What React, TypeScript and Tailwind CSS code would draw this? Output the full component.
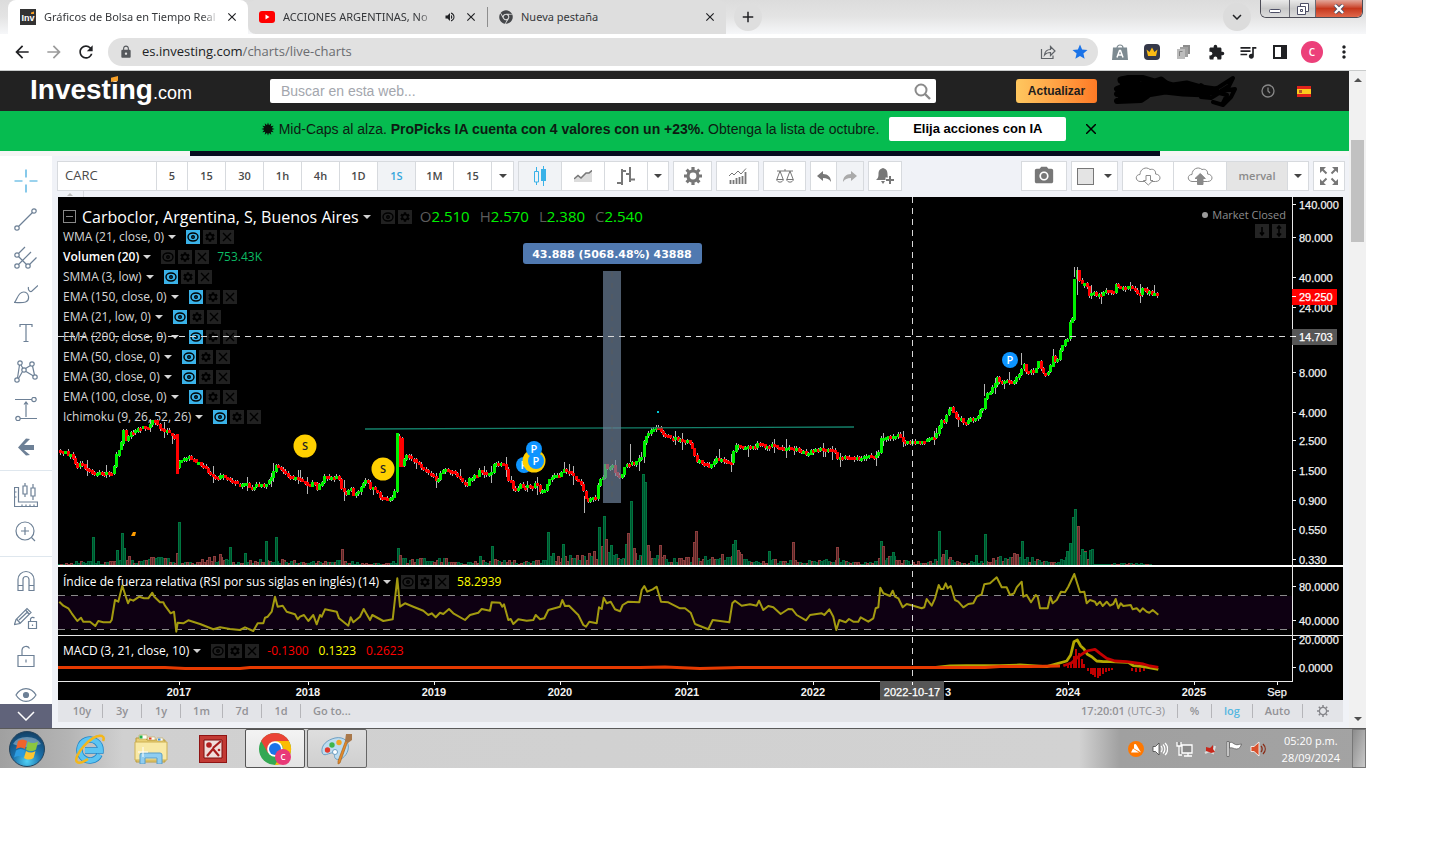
import React from "react";
import {
  MdAdd,
  MdArrowBack,
  MdArrowForward,
  MdCameraAlt,
  MdClose,
  MdExpandMore,
  MdExtension,
  MdLock,
  MdMoreVert,
  MdQueueMusic,
  MdRefresh,
  MdSettings,
  MdStar,
  MdVolumeUp,
} from "react-icons/md";
import { FaChrome } from "react-icons/fa";

type Pt = [number, number];

/* ---------- chart data ---------- */

const STEP = 2.42;
const BASE = 565;

const CLOSES: Pt[] = [
  [59, 450], [62, 451], [66, 453], [70, 455], [74, 460], [77, 465], [82, 462], [84, 467], [90, 469], [95, 474],
  [100, 472], [105, 473], [112, 473], [114, 466], [116, 453], [120, 449], [121, 441], [122, 425], [126, 440], [129, 433],
  [133, 433], [138, 427], [143, 427], [148, 427], [152, 420], [155, 421], [158, 425], [161, 430], [168, 432], [173, 437],
  [175, 436], [177, 473], [178, 478], [179, 460], [188, 457], [193, 460], [200, 463], [204, 467], [209, 473], [214, 478],
  [222, 476], [228, 479], [233, 481], [240, 485], [245, 482], [253, 489], [258, 483], [266, 484], [272, 475], [275, 464],
  [277, 466], [283, 470], [290, 476], [300, 480], [306, 482], [309, 485], [313, 481], [317, 489], [321, 482], [325, 475],
  [330, 477], [338, 478], [341, 487], [345, 494], [350, 487], [354, 496], [359, 490], [363, 484], [366, 480], [371, 488],
  [376, 490], [381, 497], [386, 500], [390, 498], [394, 497], [395, 483], [397, 434], [399, 436], [401, 466], [403, 463],
  [405, 455], [411, 459], [413, 456], [415, 462], [421, 466], [428, 473], [433, 475], [436, 482], [440, 474], [445, 469],
  [450, 471], [455, 473], [460, 478], [467, 486], [470, 478], [476, 476], [480, 470], [483, 472], [491, 474], [492, 463],
  [500, 463], [505, 465], [508, 480], [511, 482], [515, 492], [519, 485], [526, 486], [533, 487], [536, 482], [540, 490],
  [546, 488], [548, 480], [553, 477], [556, 475], [561, 474], [563, 467], [567, 470], [572, 475], [578, 480], [582, 486],
  [584, 496], [587, 501], [590, 497], [597, 497], [598, 480], [602, 480], [604, 462], [607, 470], [612, 464], [616, 474],
  [621, 478], [624, 466], [630, 463], [637, 462], [642, 456], [643, 442], [646, 435], [650, 433], [655, 426], [658, 426],
  [661, 434], [670, 436], [680, 440], [690, 442], [694, 454], [697, 460], [703, 463], [710, 467], [713, 461], [717, 458],
  [723, 461], [732, 461], [734, 444], [738, 445], [744, 448], [755, 446], [760, 443], [765, 446], [772, 445], [780, 448],
  [790, 449], [798, 449], [806, 453], [812, 450], [820, 449], [830, 449], [834, 450], [837, 459], [840, 457], [850, 457],
  [860, 458], [868, 456], [874, 458], [877, 453], [880, 453], [881, 436], [885, 438], [890, 437], [894, 434], [900, 437],
  [904, 443], [912, 440], [920, 442], [925, 442], [930, 436], [935, 437], [938, 430], [940, 419], [944, 420], [947, 411],
  [951, 408], [955, 416], [960, 418], [965, 423], [970, 419], [976, 417], [980, 411], [984, 407], [985, 395], [990, 392],
  [993, 387], [997, 377], [1000, 380], [1004, 381], [1008, 379], [1012, 382], [1016, 378], [1021, 371], [1023, 362],
  [1026, 370], [1030, 371], [1035, 372], [1038, 360], [1041, 371], [1045, 375], [1049, 370], [1052, 356], [1057, 361],
  [1060, 349], [1064, 340], [1067, 340], [1069, 322], [1072, 318], [1073, 296], [1075, 272], [1077, 270], [1080, 283],
  [1086, 284], [1088, 297], [1092, 291], [1098, 295], [1102, 296], [1106, 290], [1112, 293], [1116, 283], [1122, 288],
  [1130, 286], [1136, 291], [1140, 294], [1143, 288], [1150, 293], [1155, 293], [1159, 296],
];

const VOLUME_SPIKES: [number, number, "g" | "r"][] = [
  [93, 28, "g"], [117, 15, "g"], [122, 32, "g"], [124, 17, "g"], [177, 12, "r"], [179, 43, "g"], [220, 11, "r"],
  [230, 18, "g"], [245, 12, "g"], [266, 24, "g"], [276, 28, "g"], [342, 16, "r"], [398, 17, "g"], [400, 10, "r"],
  [480, 9, "g"], [492, 19, "g"], [548, 33, "g"], [553, 12, "g"], [563, 21, "g"], [582, 10, "r"], [599, 38, "g"],
  [602, 19, "r"], [604, 49, "g"], [606, 26, "r"], [611, 20, "g"], [626, 21, "g"], [628, 32, "r"], [631, 64, "g"],
  [634, 17, "r"], [643, 91, "g"], [645, 83, "g"], [648, 20, "r"], [660, 20, "r"], [694, 23, "r"], [696, 34, "r"],
  [733, 21, "g"], [735, 25, "g"], [738, 15, "r"], [769, 14, "g"], [793, 23, "r"], [837, 18, "r"], [881, 24, "g"],
  [883, 19, "r"], [893, 13, "g"], [939, 34, "g"], [943, 11, "r"], [946, 15, "g"], [976, 10, "g"], [985, 31, "g"],
  [1014, 12, "r"], [1022, 24, "g"], [1067, 14, "g"], [1070, 22, "g"], [1073, 48, "g"], [1075, 56, "g"], [1078, 39, "r"],
  [1082, 16, "g"], [1085, 13, "g"], [1090, 15, "g"],
];

const VOLUME_LEVELS: Pt[] = [
  [58, 1], [80, 4], [90, 6], [100, 3], [125, 10], [135, 3], [150, 8], [160, 8], [175, 3], [190, 3], [215, 8], [235, 3],
  [255, 5], [275, 7], [300, 3], [340, 5], [360, 2], [385, 2], [400, 6], [440, 7], [460, 2], [500, 6], [520, 3], [560, 9],
  [600, 14], [620, 10], [650, 14], [670, 7], [700, 7], [740, 12], [755, 5], [790, 5], [810, 4], [835, 6], [860, 2],
  [890, 9], [910, 3], [930, 4], [945, 8], [960, 3], [990, 6], [1015, 11], [1030, 7], [1045, 4], [1065, 8], [1092, 14],
  [1094, 1], [1135, 2], [1160, 0],
];

const at = (pts: Pt[], x: number) => {
  for (let i = 1; i < pts.length; i++) {
    if (x <= pts[i][0]) {
      const [x0, y0] = pts[i - 1];
      const [x1, y1] = pts[i];
      return y0 + ((y1 - y0) * (x - x0)) / (x1 - x0);
    }
  }
  return pts[pts.length - 1][1];
};

const noise = (i: number) => {
  const v = Math.sin(i * 127.1 + 11.7) * 43758.5453;
  return v - Math.floor(v);
};

/* Sub-pixel traces are stored at three units to the pixel, relative to an origin. */
const trace = (ox: number, oy: number, flat: number[]) => {
  const out: string[] = [];
  for (let i = 0; i < flat.length; i += 2) {
    out.push(`${(ox + flat[i] / 3).toFixed(1)},${(oy + flat[i + 1] / 3).toFixed(1)}`);
  }
  return out.join(" ");
};

const RSI = [
  trace(0, 440, [
    178, 485, 190, 497, 205, 505, 215, 520, 232, 543, 243, 533, 250, 545, 270, 545, 286, 558, 295, 543, 310, 547, 330, 547,
    335, 540, 345, 480, 355, 485, 367, 437, 384, 490, 390, 478, 400, 482, 418, 470, 432, 475, 445, 475, 457, 458, 463, 470,
    480, 487, 490, 487, 495, 497, 512, 520, 522, 515, 529, 575, 533, 548, 550, 550, 565, 541, 600, 552, 640, 568, 660, 562,
    690, 567, 720, 570, 735, 562, 760, 573, 773, 550, 790, 550, 795, 533, 803, 530, 815, 515, 825, 470, 833, 500, 848, 497,
    860, 515, 885, 523, 893, 538,
  ]),
  trace(300, 400, [
    0, 650, 12, 645, 25, 663, 40, 645, 50, 673, 60, 645, 65, 650, 75, 628, 110, 635, 117, 655, 145, 677, 152, 652, 160, 667,
    180, 650, 191, 627, 210, 660, 217, 645, 250, 663, 278, 658, 292, 535, 300, 620, 315, 610, 340, 620, 370, 632, 385, 645,
    395, 640, 407, 652, 420, 638, 430, 642, 447, 627, 460, 640, 495, 660, 510, 645, 535, 638, 545, 627, 570, 632, 575, 607,
    600, 608, 607, 620, 612, 613, 625, 660, 632, 657, 640, 672, 655, 658, 680, 662, 700, 660, 707, 645, 720, 658, 733, 655,
    745, 630, 780, 620, 787, 600, 795, 618, 807, 617, 825, 635, 835, 645, 850, 675, 858, 680, 868, 665, 890, 670, 897, 622,
    905, 627, 911, 593, 920, 610, 932, 605, 945, 628, 960, 634, 968, 615, 985, 605, 1018, 607, 1025, 570, 1033, 558,
    1042, 575, 1058, 568, 1070, 560, 1083, 605, 1105, 607, 1140, 625, 1155, 625, 1172, 638, 1185, 672,
  ]),
  trace(700, 400, [
    0, 678, 25, 688, 38, 660, 88, 667, 97, 610, 105, 602, 125, 617, 150, 613, 170, 617, 177, 602, 190, 630, 205, 618,
    220, 622, 242, 642, 265, 627, 277, 628, 290, 645, 318, 661, 330, 645, 365, 640, 373, 645, 388, 628, 400, 650, 409, 690,
    418, 660, 437, 667, 447, 657, 460, 665, 475, 665, 482, 652, 505, 665, 520, 655, 527, 625, 535, 622, 541, 563, 550, 580,
    570, 588, 578, 572, 585, 590, 595, 595, 608, 622, 620, 612, 640, 617, 665, 625, 673, 622, 680, 597, 695, 617, 705, 595,
    716, 555, 722, 567, 730, 567, 737, 550, 743, 565, 752, 558, 765, 600, 775, 605, 790, 622, 805, 612, 820, 610, 830, 590,
    845, 583, 853, 553, 870, 550, 890, 532, 905, 562, 920, 562, 930, 585, 942, 580, 950, 562, 965, 545, 970, 590, 980, 585,
    993, 607, 1007, 585, 1013, 590, 1020, 625, 1043, 625, 1051, 590, 1058, 610, 1070, 600, 1083, 575, 1095, 577, 1105, 560,
  ]),
  trace(1000, 500, [
    223, 222, 240, 277, 253, 275, 260, 310, 270, 300, 285, 305, 290, 315, 300, 305, 308, 318, 320, 305, 330, 317, 340, 312,
    347, 297, 355, 325, 362, 310, 370, 318, 392, 315, 398, 328, 410, 325, 420, 335, 428, 325, 440, 335, 448, 338, 458, 330,
    475, 344,
  ]),
].join(" ");

const MACD_LINE = trace(1000, 500, [
  -400, 502, -200, 503, -150, 498, -100, 497, 0, 497, 60, 495, 140, 500, 175, 490, 200, 483, 212, 465, 222, 425, 232, 420,
  242, 438, 252, 447, 262, 463, 275, 470, 290, 483, 310, 485, 330, 485, 385, 487, 400, 497, 430, 500, 475, 508,
]);

const SIGNAL_LINE = trace(1000, 500, [
  190, 497, 215, 488, 235, 470, 260, 453, 285, 448, 300, 460, 320, 475, 345, 483, 380, 485, 430, 492, 450, 498, 475, 502,
]);

const HISTOGRAM: Pt[] = [
  [1067, -4], [1070, -6], [1073, -12], [1075, -19], [1078, -15], [1081, -9], [1083, -4], [1087, 3], [1090, 6], [1092, 7],
  [1094, 9], [1097, 10], [1099, 8], [1102, 6], [1105, 4], [1108, 3], [1111, 2], [1131, 3], [1135, 4], [1139, 4], [1143, 3],
];

const PRICE_LABELS: [string, number][] = [
  ["140.000", 205], ["80.000", 238], ["40.000", 278], ["24.000", 308], ["8.000", 373], ["4.000", 413], ["2.500", 441],
  ["1.500", 471], ["0.900", 501], ["0.550", 530], ["0.330", 560], ["80.0000", 587], ["40.0000", 621], ["20.0000", 640],
  ["0.0000", 668],
];

const YEARS: [string, number][] = [
  ["2017", 179], ["2018", 308], ["2019", 434], ["2020", 560], ["2021", 687], ["2022", 813], ["2024", 1068], ["2025", 1194],
];

function Candles() {
  const wicks: React.ReactElement[] = [];
  const bodies: React.ReactElement[] = [];
  let prev = at(CLOSES, 58);
  const total = Math.floor((1159 - 58) / STEP);
  for (let i = 1; i <= total; i++) {
    const x = 58 + i * STEP;
    const px = Math.round(x);
    const close = at(CLOSES, x) + (noise(i) - 0.5) * 3;
    const up = close < prev;
    const top = Math.round(Math.min(close, prev));
    const h = Math.max(3, Math.round(Math.abs(close - prev)) + 1);
    const big = noise(i + 900) > 0.86 ? 9 : 2;
    const a = Math.round(noise(i + 300) * big);
    const b = Math.round(noise(i + 600) * big);
    wicks.push(<rect key={i} x={px} y={top - a} width={1} height={h + a + b} fill="#b5b5b5" />);
    bodies.push(<rect key={i} x={px - 1} y={top} width={3} height={h} fill={up ? "#00f000" : "#ff0000"} />);
    prev = close;
  }
  return (
    <g shapeRendering="crispEdges">
      <g>{wicks}</g>
      <g>{bodies}</g>
      <rect x="396" y="433" width="3" height="46" fill="#00f000" />
      <rect x="399" y="436" width="2" height="31" fill="#ff0000" />
      <rect x="176" y="434" width="3" height="40" fill="#ff0000" />
      <rect x="584" y="496" width="1" height="17" fill="#b5b5b5" />
      <rect x="630" y="444" width="1" height="18" fill="#b5b5b5" />
      <rect x="984" y="384" width="1" height="12" fill="#b5b5b5" />
      <rect x="1021" y="353" width="1" height="12" fill="#b5b5b5" />
      <rect x="1074" y="267" width="1" height="10" fill="#b5b5b5" />
      <rect x="1077" y="267" width="1" height="28" fill="#b5b5b5" />
    </g>
  );
}

function VolumeBars() {
  const out: React.ReactElement[] = [];
  for (let i = 0; i < 455; i++) {
    const x = 58 + i * STEP;
    const level = at(VOLUME_LEVELS, x);
    const h = Math.round(level * (0.35 + noise(i + 50) * 0.85));
    if (h < 1) continue;
    const green = noise(i + 77) > 0.5;
    out.push(
      <rect key={i} x={Math.round(x) + 0.5} y={BASE - h + 0.5} width={2} height={h} fill={green ? "#00472a" : "#562828"} stroke={green ? "#00693e" : "#8c3c3c"} />
    );
  }
  VOLUME_SPIKES.forEach(([x, h, c]) =>
    out.push(
      <rect key={`s${x}`} x={x - 0.5} y={BASE - h + 0.5} width={2} height={h} fill={c === "g" ? "#00522f" : "#562828"} stroke={c === "g" ? "#00753f" : "#8c3c3c"} />
    )
  );
  return <g>{out}</g>;
}

function Marker({ x, y, r, color, ink, label }: { x: number; y: number; r: number; color: string; ink: string; label: string }) {
  return (
    <g>
      <circle cx={x} cy={y} r={r} fill={color} />
      <text x={x} y={y + 4} textAnchor="middle" fill={ink} className="font-['Open_Sans',sans-serif] text-[11px] font-semibold">
        {label}
      </text>
    </g>
  );
}

function Chart() {
  return (
    <svg viewBox="58 197 1285 503" className="relative block h-auto w-full pointer-events-none" role="img" aria-label="CARC">
      <rect x="58" y="596" width="1234" height="33" fill="#0e0012" />
      <VolumeBars />
      <Candles />
      <path d="M131 536l2-4h3l-1 4z" fill="#ff9d00" />
      <line x1="365" y1="429" x2="854" y2="427" stroke="#14806a" strokeWidth="1.4" />
      <rect x="657" y="411" width="2" height="2" fill="#00c8d7" />
      <rect x="603" y="271" width="18" height="232" fill="#6c8099" fillOpacity="0.7" />
      <path d="M612 272V503" stroke="#5b5b5b" strokeDasharray="5 6" strokeOpacity="0.7" />
      <rect x="523" y="243" width="179" height="21" rx="3" fill="#5079b0" />
      <text x="612" y="258" textAnchor="middle" fill="#fff" className="font-['DejaVu_Sans',sans-serif] text-[11px] font-bold">
        43.888 (5068.48%) 43888
      </text>

      <Marker x={305} y={446} r={11.5} color="#ffd000" ink="#222" label="S" />
      <Marker x={383} y={469} r={11.5} color="#ffd000" ink="#222" label="S" />
      <Marker x={524} y={465} r={8} color="#0d94ff" ink="#fff" label="P" />
      <circle cx="534" cy="461" r="11.5" fill="#ffd000" />
      <Marker x={534} y={449} r={8} color="#0d94ff" ink="#fff" label="P" />
      <Marker x={536} y={461} r={8} color="#0d94ff" ink="#fff" label="P" />
      <Marker x={1010} y={360} r={8} color="#0d94ff" ink="#fff" label="P" />

      <g stroke="#8a8a8a" strokeDasharray="7 6">
        <path d="M58 595.5H1292M58 629.5H1292" />
      </g>
      <polyline points={RSI} fill="none" stroke="#a39a10" strokeWidth="2" strokeLinejoin="round" />

      {HISTOGRAM.map(([x, h]) => (
        <rect key={x} x={x} y={h < 0 ? 668 + h : 668} width="2" height={Math.abs(h)} fill="#c00000" />
      ))}
      <polyline points={MACD_LINE} fill="none" stroke="#b3a800" strokeWidth="2.8" strokeLinejoin="round" />
      <path d="M58 667.5H165L185 668.5H240L250 667.5H640L665 667L700 668.5L740 667.5H985L1000 666.5H1030L1060 666" fill="none" stroke="#e63a00" strokeWidth="3" />
      <polyline points={SIGNAL_LINE} fill="none" stroke="#c40000" strokeWidth="2.8" strokeLinejoin="round" />

      <g fill="#e8e8e8">
        <rect x="58" y="565" width="1285" height="2" fill="#fff" />
        <rect x="58" y="635" width="1285" height="1" />
        <rect x="58" y="681" width="1235" height="1" />
        <rect x="1292" y="197" width="1" height="485" />
      </g>
      <g stroke="#d8d8d8" strokeDasharray="6 5">
        <path d="M58 336.5H1292" />
        <path d="M912.5 197V682" />
      </g>

      <g className="font-['Liberation_Sans',Arial,sans-serif] text-[11px]" fill="#f2f2f2">
        {PRICE_LABELS.map(([t, y]) => (
          <g key={t}>
            <rect x="1292" y={y - 1} width="4" height="1" />
            <text x="1299" y={y + 4} stroke="#f2f2f2" strokeWidth="0.25">{t}</text>
          </g>
        ))}
        <rect x="1294" y="631" width="48" height="4" fill="#000" />
        <rect x="1292" y="289" width="45" height="16" fill="#ff0000" />
        <rect x="1292" y="329" width="45" height="16" fill="#565656" />
        <path d="M1292 296.5h4M1292 336.5h4" stroke="#fff" />
        <text x="1299" y="301" fill="#fff" stroke="#fff" strokeWidth="0.25">29.250</text>
        <text x="1299" y="341" fill="#fff" stroke="#fff" strokeWidth="0.25">14.703</text>
        {YEARS.map(([t, x]) => (
          <g key={t}>
            <rect x={x} y="682" width="1" height="3" />
            <text x={x} y="696" textAnchor="middle" className="font-bold">{t}</text>
          </g>
        ))}
        <text x="945" y="696" className="font-bold">3</text>
        <rect x="1277" y="682" width="1" height="3" />
        <text x="1277" y="696" textAnchor="middle" stroke="#f2f2f2" strokeWidth="0.25">Sep</text>
        <rect x="880" y="681" width="64" height="19" fill="#565656" />
        <path d="M912.5 682v3" stroke="#fff" />
        <text x="912" y="696" textAnchor="middle" fill="#fff" stroke="#fff" strokeWidth="0.25">2022-10-17</text>
      </g>
    </svg>
  );
}

/* ---------- legend ---------- */

function Caret({ className }: { className: string }) {
  return (
    <svg viewBox="0 0 8 4" className={`h-1 w-2 shrink-0 ${className}`} aria-hidden="true">
      <path d="M0 0h8L4 4z" fill="currentColor" />
    </svg>
  );
}

function LegendButtons({ on = false, close = true }: { on?: boolean; close?: boolean }) {
  const off = "flex size-[14px] items-center justify-center bg-[#212121] text-black";
  return (
    <span className="ml-2.5 flex gap-[3px]">
      <button type="button" aria-label="Ocultar" className={on ? "flex size-[14px] items-center justify-center bg-[#3ab2e8] text-black" : off}>
        <svg viewBox="0 0 12 12" className="size-3" fill="none" stroke="currentColor" strokeWidth="1.4">
          <ellipse cx="6" cy="6" rx="5" ry="4" />
          <circle cx="6" cy="6" r="1.3" />
        </svg>
      </button>
      <button type="button" aria-label="Formato" className={off}>
        <MdSettings className="size-3" />
      </button>
      {close && (
        <button type="button" aria-label="Eliminar" className={off}>
          <svg viewBox="0 0 12 12" className="size-3" fill="none" stroke="currentColor" strokeWidth="1.4">
            <path d="M2 2l8 8M10 2l-8 8" />
          </svg>
        </button>
      )}
    </span>
  );
}

const STUDIES: { name: string; on: boolean; value?: string }[] = [
  { name: "WMA (21, close, 0)", on: true },
  { name: "Volumen (20)", on: false, value: "753.43K" },
  { name: "SMMA (3, low)", on: true },
  { name: "EMA (150, close, 0)", on: true },
  { name: "EMA (21, low, 0)", on: true },
  { name: "EMA (200, close, 0)", on: true },
  { name: "EMA (50, close, 0)", on: true },
  { name: "EMA (30, close, 0)", on: true },
  { name: "EMA (100, close, 0)", on: true },
  { name: "Ichimoku (9, 26, 52, 26)", on: true },
];

const OHLC: [string, string][] = [["O", "2.510"], ["H", "2.570"], ["L", "2.380"], ["C", "2.540"]];

function Legend() {
  return (
    <>
      <div className="absolute top-[9px] left-[5px]">
        <div className="flex h-[21px] items-center text-[16px] leading-none text-white">
          <svg viewBox="0 0 13 13" className="mr-1.5 size-[13px]" fill="none" stroke="#888">
            <rect x=".5" y=".5" width="12" height="12" />
            <path d="M3 6.5h7" />
          </svg>
          <h1 className="font-medium">Carboclor, Argentina, S, Buenos Aires</h1>
          <Caret className="ml-1 text-[#d0d0d0]" />
          <LegendButtons close={false} />
          <span className="ml-2 flex gap-2.5 text-[15px]">
            {OHLC.map(([k, v]) => (
              <span key={k} className="text-[#5c5c5c]">
                {k}
                <span className="font-medium text-[#00f000]">{v}</span>
              </span>
            ))}
          </span>
        </div>
        {STUDIES.map((s) => (
          <div key={s.name} className="flex h-5 items-center text-[12px] text-[#d6d6d6]">
            <span className={s.value ? "font-semibold text-white" : ""}>{s.name}</span>
            <Caret className="ml-1" />
            <LegendButtons on={s.on} />
            {s.value && <span className="ml-2 text-[#0cba64]">{s.value}</span>}
          </div>
        ))}
      </div>
      <div className="absolute top-[375px] left-[5px] flex h-5 items-center text-[12px] text-white">
        <span>Índice de fuerza relativa (RSI por sus siglas en inglés) (14)</span>
        <Caret className="ml-1 text-[#d0d0d0]" />
        <LegendButtons />
        <span className="ml-2 text-[#ffff00]">58.2939</span>
      </div>
      <div className="absolute top-[444px] left-[5px] flex h-5 items-center text-[12px] text-white">
        <span>MACD (3, 21, close, 10)</span>
        <Caret className="ml-1 text-[#d0d0d0]" />
        <LegendButtons />
        <span className="ml-2 text-[#f00]">-0.1300</span>
        <span className="ml-2.5 text-[#ffff00]">0.1323</span>
        <span className="ml-2.5 text-[#f00]">0.2623</span>
      </div>
      <div className="absolute top-[9px] right-[57px] flex flex-col items-end text-[11px] font-medium text-[#8d8d8d]">
        <div className="flex h-[18px] items-center gap-1">
          <span className="size-1.5 rounded-full bg-[#9a9a9a]" />
          Market Closed
        </div>
        <div className="flex gap-[3px]">
          <svg viewBox="0 0 14 14" className="size-[14px] bg-[#242424]" fill="none" stroke="#000" strokeWidth="1.6">
            <path d="M7 3v8M5 8.500l2 2.500 2-2.500" />
          </svg>
          <svg viewBox="0 0 14 14" className="size-[14px] bg-[#242424]" fill="none" stroke="#000" strokeWidth="1.6">
            <path d="M7 2v10M5 4.500l2-2.500 2 2.500M5 9.500l2 2.500 2-2.500" />
          </svg>
        </div>
      </div>
    </>
  );
}

/* ---------- browser chrome ---------- */

function TabBar() {
  return (
    <div className="flex h-[34px] bg-gradient-to-b from-[#dcdcdc] via-[#e4e4e4] to-[#f6f7f9] pl-2 font-['Noto_Sans','Open_Sans',sans-serif] text-[11px] text-[#35373a]">
      <div className="flex w-60 items-center rounded-t-lg bg-white pr-[9px] pl-3">
        <svg viewBox="0 0 16 16" className="mr-2 size-4 shrink-0">
          <rect width="16" height="16" fill="#333" />
          <text x="8" y="11.500" textAnchor="middle" fill="#fff" className="font-['Liberation_Sans',sans-serif] text-[9px] font-bold">Inv</text>
          <path d="M11 3.500l3-1v2.500h-3z" fill="#f7a028" />
        </svg>
        <span className="min-w-0 flex-1 overflow-hidden whitespace-nowrap [mask-image:linear-gradient(90deg,#000_90%,transparent)]">
          Gráficos de Bolsa en Tiempo Real
        </span>
        <button type="button" aria-label="Cerrar pestaña" className="ml-1.5 text-[#202124]">
          <MdClose className="size-[14px]" />
        </button>
      </div>
      <div className="flex w-[239px] items-center rounded-tl-lg rounded-bl-lg bg-[#dedede] pr-[9px] pl-[11px]">
        <svg viewBox="0 0 16 12" className="mr-2 h-3 w-4 shrink-0">
          <rect width="16" height="12" rx="3" fill="#f00" />
          <path d="M6.500 3.500v5l4-2.500z" fill="#fff" />
        </svg>
        <span className="min-w-0 flex-1 overflow-hidden whitespace-nowrap [mask-image:linear-gradient(90deg,#000_88%,transparent)]">
          ACCIONES ARGENTINAS, No
        </span>
        <MdVolumeUp className="ml-2 size-3 text-[#202124]" />
        <button type="button" aria-label="Cerrar pestaña" className="ml-2 text-[#202124]">
          <MdClose className="size-[14px]" />
        </button>
      </div>
      <div className="flex w-[239px] items-center rounded-tr-lg bg-[#dedede] pr-[9px]">
        <span className="mr-[11px] h-5 w-px bg-[#8e8e8e]" />
        <FaChrome className="mr-2 size-[14px] text-[#45474a]" />
        <span className="flex-1">Nueva pestaña</span>
        <button type="button" aria-label="Cerrar pestaña" className="text-[#202124]">
          <MdClose className="size-[14px]" />
        </button>
      </div>
      <button type="button" aria-label="Nueva pestaña" className="mt-[3px] ml-2 flex size-7 items-center justify-center rounded-full bg-[#dedede] text-[#202124]">
        <MdAdd className="size-[18px]" />
      </button>
      <button type="button" aria-label="Buscar pestañas" className="mt-[3px] mr-[9px] ml-auto flex size-7 items-center justify-center rounded-full bg-[#dcdcdc] text-[#202124]">
        <MdExpandMore className="size-[18px]" />
      </button>
      <div className="mr-[3px] flex h-[18px] overflow-hidden rounded-b-md border border-t-0 border-[#4b4b55]">
        <button type="button" aria-label="Minimizar" className="flex w-7 items-center justify-center bg-gradient-to-b from-[#e9e9e9] via-[#c9c9c9] to-[#dcdcdc]">
          <svg viewBox="0 0 12 4" className="mt-1 h-1 w-3"><rect x=".5" y=".5" width="11" height="3" rx="1" fill="#fff" stroke="#4d4f66" /></svg>
        </button>
        <button type="button" aria-label="Restaurar" className="flex w-[27px] items-center justify-center border-x border-[#6b6b75] bg-gradient-to-b from-[#e9e9e9] via-[#c9c9c9] to-[#dcdcdc]">
          <svg viewBox="0 0 12 12" className="size-3" fill="#fff" stroke="#4d4f66">
            <path d="M3.500.5h8v8h-8z" />
            <path d="M.5 3.500h8v8h-8z" />
            <path d="M3.500 6.500h2v2h-2z" />
          </svg>
        </button>
        <button type="button" aria-label="Cerrar" className="flex w-[46px] items-center justify-center bg-gradient-to-b from-[#e2a69a] via-[#c6371c] to-[#e0674a]">
          <svg viewBox="0 0 12 10" className="h-2.5 w-3" fill="none">
            <path d="M2 1l8 8M10 1l-8 8" stroke="#4d4f66" strokeWidth="4" />
            <path d="M2 1l8 8M10 1l-8 8" stroke="#fff" strokeWidth="2.400" />
          </svg>
        </button>
      </div>
    </div>
  );
}

function AddressBar() {
  const cell = "flex w-8 items-center justify-center text-[#202124]";
  return (
    <div className="flex h-9 items-center bg-white pr-1.5 pl-1.5">
      <button type="button" aria-label="Atrás" className={cell}><MdArrowBack className="size-5" /></button>
      <button type="button" aria-label="Adelante" className="flex w-8 items-center justify-center text-[#9b9b9b]"><MdArrowForward className="size-5" /></button>
      <button type="button" aria-label="Recargar" className={cell}><MdRefresh className="size-5" /></button>
      <div className="mr-1.5 ml-1.5 flex h-7 flex-1 items-center rounded-full bg-[#e1e1e1] pr-[9px] pl-[11px]">
        <MdLock className="size-[14px] text-[#55585c]" />
        <a href="https://es.investing.com/charts/live-charts" className="ml-[9px] flex-1 text-[13px] text-[#6a6c70]">
          <span className="text-[#202124]">es.investing.com</span>/charts/live-charts
        </a>
        <svg viewBox="0 0 16 16" className="mr-[15px] size-4" fill="none" stroke="#5f6368" strokeWidth="1.200">
          <path d="M1.500 5v9.500h11.500v-3" />
          <path d="M4.500 11c.5-4 3-5.500 6-5.500V2.500l4.500 4.500-4.500 4.500V8.500c-2.500 0-4.500.5-6 2.500z" />
        </svg>
        <MdStar className="size-[18px] text-[#1a73e8]" />
      </div>
      <button type="button" aria-label="Extensión A" className={cell}>
        <svg viewBox="0 0 16 16" className="size-4">
          <path d="M5 4a3 3 0 016 0" fill="none" stroke="#7d8a91" strokeWidth="1.200" />
          <path d="M1 3.500h14l1 12.500H0z" fill="#7d8a91" />
          <path d="M5 13.500l2.500-7h1l2.500 7M6 11h4" fill="none" stroke="#fff" strokeWidth="1.500" />
        </svg>
      </button>
      <button type="button" aria-label="Extensión corona" className={cell}>
        <svg viewBox="0 0 16 16" className="size-4">
          <rect width="16" height="16" rx="4" fill="#353849" />
          <path d="M2.500 5.500l3 2.500L8 3.500 10.500 8l3-2.500L12 12H4z" fill="#fbbb14" />
        </svg>
      </button>
      <button type="button" aria-label="Extensión copiar" className={cell}>
        <svg viewBox="0 0 16 16" className="size-4">
          <path d="M7 1h7v9H7z" fill="#8c8c8c" />
          <path d="M4 3h8v10H4z" fill="#a0a0a0" />
          <path d="M1 5h8v10H1z" fill="#bcbcbc" />
          <path d="M3.500 7.500h3M3.500 7.500v4.500" stroke="#808080" fill="none" />
        </svg>
      </button>
      <button type="button" aria-label="Extensiones" className={cell}><MdExtension className="size-[17px]" /></button>
      <button type="button" aria-label="Control multimedia" className={cell}><MdQueueMusic className="size-5" /></button>
      <button type="button" aria-label="Panel lateral" className={cell}>
        <svg viewBox="0 0 14 14" className="size-[14px]"><path d="M0 0h14v14H0zM2 2v10h6V2z" fill="currentColor" fillRule="evenodd" /></svg>
      </button>
      <button type="button" aria-label="Perfil" className="mx-[5px] flex size-[22px] items-center justify-center rounded-full bg-[#ec407a] text-[10px] leading-none font-semibold text-white">C</button>
      <button type="button" aria-label="Menú" className={cell}><MdMoreVert className="size-5" /></button>
    </div>
  );
}

/* ---------- site header ---------- */

function SiteHeader() {
  return (
    <header className="flex h-10 items-center bg-[#222] font-['Liberation_Sans',Arial,sans-serif]">
      <a href="/" className="relative flex w-[270px] shrink-0 items-baseline pl-[30px] leading-10 text-white">
        <span className="text-[28px] font-bold">Investing</span>
        <span className="text-[18px]">.com</span>
        <svg viewBox="0 0 6 5" className="absolute top-[6px] left-[111px] h-[6px] w-[7px]"><path d="M0 1.500L6 0v4L0 5z" fill="#f7a028" /></svg>
      </a>
      <label className="flex h-6 flex-1 items-center rounded-xs bg-white px-[11px]">
        <input type="search" aria-label="Buscar" placeholder="Buscar en esta web..." className="min-w-0 flex-1 text-[14px] outline-none placeholder:text-[#a3a6ad]" />
        <svg viewBox="0 0 17 17" className="-mr-1.5 size-[17px]" fill="none" stroke="#8a8a8a">
          <circle cx="7" cy="7" r="5.500" strokeWidth="2" />
          <path d="M11 11l5 5" strokeWidth="2.400" />
        </svg>
      </label>
      <button type="button" className="ml-20 h-6 w-[81px] rounded-[3px] bg-gradient-to-r from-[#ffc75f] to-[#fd7a25] text-[12px] font-bold text-[#1d1d1d]">Actualizar</button>
      <svg viewBox="0 0 130 32" className="ml-3.5 h-8 w-[130px]" fill="none" stroke="#000" strokeLinecap="round" strokeLinejoin="round">
        <path d="M10 5l10-2-8 6 14-3-20 8 24-3-24 8 28-4-24 8 26-4-30 7 24-1 6-4" strokeWidth="6" />
        <path d="M10 5l10-2h10l14 4 6-2 10 8-24 4-16 6" strokeWidth="7" />
        <path d="M24 12l24-4 14 4 14-2 14 4 14 2M30 19l24-4 18 2 24 1" strokeWidth="9" />
        <path d="M90 10l8 6 10-4 14-9-4 8-8 5 14-2-4 8-8 8-10-3M90 22l10 1 8-5 8 2-4 8" strokeWidth="4" />
      </svg>
      <svg viewBox="0 0 14 14" className="ml-5 size-[14px]" fill="none" stroke="#888" strokeWidth="1.300">
        <circle cx="7" cy="7" r="6" />
        <path d="M7 3.500V7l2 2" />
      </svg>
      <svg viewBox="0 0 14 11" className="mr-[38px] ml-[22px] h-[11px] w-[14px]">
        <path fill="#e0231c" d="M0 0h14v11H0z" />
        <path fill="#fbcb1e" d="M0 3h14v5H0z" />
        <path fill="#b5562a" d="M2 4h3v3H2z" />
      </svg>
    </header>
  );
}

function PromoBanner() {
  return (
    <div className="flex h-10 items-center justify-center bg-[#06bc50] pb-1 pl-2 font-['Liberation_Sans',Arial,sans-serif] text-[14px] text-[#0d1b12]">
      <svg viewBox="-7 -7 14 14" className="mr-1 size-[14px]">
        {[0, 30, 60, 90, 120, 150].map((a) => (
          <path key={a} d="M-2.500 0L0-6.500 2.500 0 0 6.500z" transform={`rotate(${a})`} fill="#0a120c" />
        ))}
      </svg>
      <p className="whitespace-nowrap">
        Mid-Caps al alza. <strong>ProPicks IA cuenta con 4 valores con un +23%.</strong> Obtenga la lista de octubre.
      </p>
      <button type="button" className="ml-2.5 h-6 w-[177px] rounded-xs bg-white text-[13px] font-bold text-black">Elija acciones con IA</button>
      <button type="button" aria-label="Cerrar aviso" className="ml-5 text-black">
        <svg viewBox="0 0 10 10" className="size-2.5" fill="none" stroke="currentColor" strokeWidth="1.500"><path d="M0 0l10 10M10 0L0 10" /></svg>
      </button>
    </div>
  );
}

/* ---------- drawing tools ---------- */

function Tool({ label, children }: { label: string; children: React.ReactNode }) {
  return (
    <button type="button" aria-label={label} className="flex w-full flex-1 items-center justify-center">
      <svg viewBox="0 0 24 24" className="size-6" fill="none" stroke="#6d8096" strokeWidth="1.200">
        {children}
      </svg>
    </button>
  );
}

function DrawingTools() {
  return (
    <aside className="relative flex h-[572px] w-[52px] shrink-0 flex-col overflow-hidden bg-white pt-1.5">
      <div className="flex h-[304px] shrink-0 flex-col">
        <Tool label="Cursor"><path d="M12 .5v8M12 15.500v8M.5 12h8M15.500 12h8" stroke="#37a6dc" /></Tool>
        <Tool label="Línea de tendencia"><circle cx="3" cy="21" r="2.200" /><circle cx="20" cy="4" r="2.200" /><path d="M4.500 19.500L18.500 5.500" /></Tool>
        <Tool label="Horquilla"><circle cx="3" cy="10" r="2.200" /><circle cx="14" cy="21" r="2.200" /><circle cx="3" cy="21" r="2.200" /><path d="M4.500 8.500L11 2M4.500 19.500L17 7M15.500 19.500L22.500 12.500M4.500 11.500l8 8" /></Tool>
        <Tool label="Pincel"><path d="M.5 19.500C3 17 4 9 9.500 9s7 8 2 10c-3 1-7 .5-11 .5zM14.500 4c-.5 2 .5 5 3 4.500L24 2.500" /></Tool>
        <Tool label="Texto"><path d="M6 6V3.500h12V6M12 3.500V20.500M9.500 20.500h5" /></Tool>
        <Tool label="Patrones"><circle cx="3" cy="21" r="2.200" /><circle cx="6" cy="4" r="2.200" /><circle cx="10" cy="11" r="2.200" /><circle cx="18" cy="5" r="2.200" /><circle cx="21" cy="18" r="2.200" /><path d="M3.500 19L5.500 6M7 6l2 3.500M11.500 9.500L16.500 6.500M18.500 7l2 9M12 12.500l7.500 4.500M8.500 12.500L4.500 19.500" /></Tool>
        <Tool label="Medir"><circle cx="20" cy="2.500" r="2.200" /><circle cx="4" cy="21.500" r="2.200" /><path d="M1 2.500h17M6 21.500h17M12 20V5M10 7.500l2-2.500 2 2.500" /></Tool>
        <Tool label="Atrás"><path d="M12 3.500l4 .5-6 6h10v5H10l6 5-4 .5-8-8z" fill="#6d8096" stroke="none" /></Tool>
      </div>
      <div className="mt-1 mb-[5px] h-px shrink-0 bg-[#dfe7ee]" />
      <div className="flex h-[74px] shrink-0 flex-col">
        <Tool label="Escala"><path d="M.5 4.500v19h23v-4.500H4.500V4.500zM.5 9h2M.5 14h2M8 21.500v2M12 21.500v2M16 21.500v2M20 21.500v2M11 0v3M11 11v3M9 3h4v8H9zM19 1v4M19 13v4M17 5h4v8h-4z" /></Tool>
        <Tool label="Ampliar"><circle cx="11" cy="11" r="9" /><path d="M17.500 17.500l3.500 3.500M7 11h8M11 7v8" /></Tool>
      </div>
      <div className="mt-1.5 mb-[5px] h-px shrink-0 bg-[#dfe7ee]" />
      <div className="flex h-[152px] shrink-0 flex-col">
        <Tool label="Imán"><path d="M4 21.500V10.500a8 8 0 0116 0V21.500h-5V10.500a3 3 0 00-6 0V21.500zM4 16.500h5M15 16.500h5" /></Tool>
        <Tool label="Bloquear dibujo"><path d="M.5 17.500L2 12.500 13 1.500l4 4L6 16.500zM3 12.500l3 3.500M12 3.500l3 3.500M5 13L14 4.500M14.500 14.500h8v7h-8zM16.500 14.500v-2.500a2.500 2.500 0 014-1M18.500 17.500v1.500" /></Tool>
        <Tool label="Bloquear"><path d="M4 10.500h16v11H4zM8 10.500V5a4 4 0 017.500-1.500M12 14.500v3" /></Tool>
        <Tool label="Ocultar dibujos"><path d="M2 12c5-8.500 15-8.500 20 0-5 8.500-15 8.500-20 0z" /><circle cx="12" cy="12" r="2.500" fill="#6d8096" /></Tool>
      </div>
      <button type="button" aria-label="Más herramientas" className="absolute bottom-0 left-0 flex h-6 w-full items-center justify-center bg-[#60637a]">
        <svg viewBox="0 0 18 10" className="h-2.5 w-[18px]" fill="none" stroke="#fff" strokeWidth="1.500"><path d="M1 1l8 8 8-8" /></svg>
      </button>
    </aside>
  );
}

/* ---------- chart toolbar ---------- */

const GROUP = "flex h-[30px] divide-x divide-[#d7dade] border border-[#d7dade] bg-white text-[#4a4a4a]";
const CELL = "flex items-center justify-center";

const INTERVALS = ["15", "30", "1h", "4h", "1D", "1S", "1M", "15"];

function Toolbar() {
  return (
    <div className="flex items-start justify-between pt-[5px] pr-1 pl-[5px] text-[11px] font-semibold">
      <div className="flex gap-1">
        <div className={GROUP}>
          <input aria-label="Símbolo" defaultValue="CARC" className="w-[99px] px-[7px] text-[13px] font-normal outline-none" />
          <button type="button" className={`${CELL} w-[31px]`}>5</button>
          {INTERVALS.map((t, i) => (
            <button key={i} type="button" className={t === "1S" ? `${CELL} w-[38px] bg-[#f1f3f6] text-[#37a6dc]` : `${CELL} w-[38px]`}>{t}</button>
          ))}
          <button type="button" aria-label="Más intervalos" className={`${CELL} w-[21px]`}><Caret className="text-[#444]" /></button>
        </div>
        <div className={GROUP}>
          <button type="button" aria-label="Velas" className={`${CELL} w-[43px] bg-[#f1f3f6]`}>
            <svg viewBox="0 0 14 20" className="h-5 w-[14px]" fill="none" stroke="#3ab2e8"><path d="M3.500 1v4M3.500 16v3M1.500 5.500h4v10.500h-4zM10.500 0v20" /><path d="M8 3h5v12H8z" fill="#3ab2e8" stroke="none" /></svg>
          </button>
          <button type="button" aria-label="Área" className={`${CELL} w-[43px]`}>
            <svg viewBox="0 0 18 12" className="h-3 w-[18px]"><path d="M0 10l4-4 3 2 5-5h2l4-3v12H0z" fill="#dcdcdc" /><path d="M0 9l4-3.500 3 2.500 5-5h3l3-2.500" fill="none" stroke="#777" strokeWidth="1.600" /></svg>
          </button>
          <button type="button" aria-label="Barras" className={`${CELL} w-[43px]`}>
            <svg viewBox="0 0 18 18" className="size-[18px]" fill="none" stroke="#777" strokeWidth="2"><path d="M5 2v16M5 4h4M0 16h5M13 0v15M9 7h4M13 12.500h5" /></svg>
          </button>
          <button type="button" aria-label="Más estilos" className={`${CELL} w-5`}><Caret className="text-[#444]" /></button>
        </div>
        <button type="button" aria-label="Propiedades" className={`${GROUP} ${CELL} w-[39px]`}>
          <svg viewBox="-9 -9 18 18" className="size-[18px]" fill="none" stroke="#777">
            <circle r="5" strokeWidth="3.200" />
            <path d="M0-6v-3M0 6v3M-6 0h-3M6 0h3M4.200-4.200l2.200-2.200M-4.200-4.200l-2.200-2.200M4.200 4.200l2.200 2.200M-4.200 4.200l-2.200 2.200" strokeWidth="3.200" />
          </svg>
        </button>
        <button type="button" aria-label="Indicadores" className={`${GROUP} ${CELL} w-[43px]`}>
          <svg viewBox="0 0 18 16" className="h-4 w-[18px]" fill="none" stroke="#777"><path d="M1.500 16v-4M4.500 16v-4M7.500 16v-6M10.500 16V9M13.500 16V8M16.500 16V4" strokeWidth="1.800" /><path d="M0 8l3-3 2 2 4-4 3 3 5-5.500" /></svg>
        </button>
        <button type="button" aria-label="Comparar" className={`${GROUP} ${CELL} w-[43px]`}>
          <svg viewBox="0 0 18 14" className="h-[14px] w-[18px]" fill="none" stroke="#777"><path d="M1 2h16M9 0v2M4 2L1 10M4 2l3 8M14 2l-3 8M14 2l3 8M.5 10.500c1 3.500 6 3.500 7 0zM10.500 10.500c1 3.500 6 3.500 7 0z" /></svg>
        </button>
        <div className={GROUP}>
          <button type="button" aria-label="Deshacer" className={`${CELL} w-[26px]`}>
            <svg viewBox="0 0 14 11" className="h-[11px] w-[14px]" fill="#777"><path d="M0 5l6-5v3c5 0 8 3 8 8-2-3-4-4-8-4v3z" /></svg>
          </button>
          <button type="button" aria-label="Rehacer" className={`${CELL} w-[26px] bg-[#f1f3f6]`}>
            <svg viewBox="0 0 14 11" className="h-[11px] w-[14px]" fill="#aaa"><path d="M14 5L8 0v3C3 3 0 6 0 11c2-3 4-4 8-4v3z" /></svg>
          </button>
        </div>
        <button type="button" aria-label="Crear alerta" className={`${GROUP} ${CELL} w-[34px]`}>
          <svg viewBox="0 0 18 16" className="h-4 w-[18px]"><path d="M7 0c3.500 1 4.500 3 4.500 6 0 3 .5 4.500 2 6H0c2-1.500 2.500-3 2.500-6 0-3 1-5 4.500-6zM5 13h4l-2 3z" fill="#777" /><path d="M14 7v9M9.500 11.500H18" stroke="#fff" strokeWidth="4" /><path d="M14 8v8M10 12h8" stroke="#777" strokeWidth="2" /></svg>
        </button>
      </div>
      <div className="flex gap-1">
        <button type="button" aria-label="Captura" className={`${GROUP} ${CELL} w-[46px]`}><MdCameraAlt className="size-[22px] text-[#777]" /></button>
        <button type="button" aria-label="Diseño" className={`${GROUP} w-[47px] items-center justify-center gap-[10px] divide-x-0`}>
          <span className="size-[17px] border border-[#777] bg-[#e4e4e4]" /><Caret className="text-[#444]" />
        </button>
        <div className={GROUP}>
          <button type="button" aria-label="Cargar" className={`${CELL} w-[51px]`}>
            <svg viewBox="0 0 26 20" className="h-5 w-[26px]" fill="#fff" stroke="#8a8a8a"><path d="M5 15.500C0 15 0 8.500 5 8.500 5 3 11 0 15 3.500c4-1 6 1.500 5.500 4.500 6 .5 6 7.500 0 7.500z" /><path d="M11 9.500h4.500v5H18L13.300 19 8.500 14.500H11z" /></svg>
          </button>
          <button type="button" aria-label="Guardar" className={`${CELL} w-[53px]`}>
            <svg viewBox="0 0 26 20" className="h-5 w-[26px]" fill="#fff" stroke="#8a8a8a"><path d="M5 15.500C0 15 0 8.500 5 8.500 5 3 11 0 15 3.500c4-1 6 1.500 5.500 4.500 6 .5 6 7.500 0 7.500z" /><path d="M13.300 7.500l5 5H16v6h-5.500v-6H8z" fill="#8a8a8a" /></svg>
          </button>
          <button type="button" className={`${CELL} w-[61px] bg-[#e5e5e5] text-[#8a8a8a]`}>merval</button>
          <button type="button" aria-label="Más diseños" className={`${CELL} w-5`}><Caret className="text-[#444]" /></button>
        </div>
        <button type="button" aria-label="Pantalla completa" className={`${GROUP} ${CELL} w-8`}>
          <svg viewBox="0 0 18 18" className="size-[18px]" fill="#777" stroke="#777" strokeWidth="2"><path d="M0 6V0h6zM12 0h6v6zM0 12v6h6zM18 12v6h-6z" stroke="none" /><path d="M2 2l4.500 4.500M16 2l-4.500 4.500M2 16l4.500-4.500M16 16l-4.500-4.500" /></svg>
        </button>
      </div>
    </div>
  );
}

function BottomBar() {
  const sep = <span className="h-[14px] w-px bg-[#b5b5b9]" />;
  return (
    <div className="flex h-[22px] items-center justify-between bg-[#e3e4e8] text-[11px] font-semibold text-[#929296]">
      <div className="flex items-center">
        {["10y", "3y", "1y", "1m", "7d", "1d"].map((t, i) => (
          <React.Fragment key={t}>
            <button type="button" className={i === 0 ? "w-[44px] pl-1" : i === 3 ? "w-[41px]" : "w-[38px]"}>{t}</button>
            {sep}
          </React.Fragment>
        ))}
        <button type="button" className="ml-3">Go to...</button>
      </div>
      <div className="flex items-center">
        <span className="mr-3">17:20:01 <span className="font-normal">(UTC-3)</span></span>
        {sep}
        <button type="button" className="w-[33px]">%</button>
        {sep}
        <button type="button" className="w-10 text-[#55b7e0]">log</button>
        {sep}
        <button type="button" className="w-[49px]">Auto</button>
        {sep}
        <button type="button" aria-label="Ajustes" className="flex w-10 justify-center">
          <svg viewBox="-6 -6 12 12" className="size-3" fill="none" stroke="#85858a">
            <circle r="3.600" strokeWidth="1.300" />
            <path d="M0-4v-2M0 4v2M-4 0h-2M4 0h2M2.800-2.800l1.400-1.400M-2.800-2.800l-1.400-1.400M2.800 2.800l1.400 1.400M-2.800 2.800l-1.400 1.400" strokeWidth="1.500" />
          </svg>
        </button>
      </div>
    </div>
  );
}

/* ---------- taskbar ---------- */

function Taskbar() {
  return (
    <footer className="flex h-10 items-center border-t border-[#5a5a5a] bg-[linear-gradient(90deg,#a0a0a0_0,#b4b4b4_5%,#d0d0d0_9%,#d2d2d2_79%,#a0a0a0_82%,#a3a3a3_100%)] text-[11px] text-white">
      <button type="button" aria-label="Inicio" className="ml-2 shrink-0">
        <svg viewBox="0 0 38 38" className="size-[38px]">
          <defs>
            <radialGradient id="orb" cx=".5" cy=".85" r=".9">
              <stop offset="0" stopColor="#4fd0f5" /><stop offset=".45" stopColor="#1a6ea8" /><stop offset="1" stopColor="#123a5c" />
            </radialGradient>
          </defs>
          <circle cx="19" cy="19" r="17.500" fill="url(#orb)" stroke="#24435c" />
          <path d="M5 14a15 11 0 0128 0c-9 4-19 4-28 0z" fill="#fff" opacity=".35" />
          <path d="M10 11c3-2 6-2 9 0l-2 8c-3-2-6-2-9 0z" fill="#f0642c" />
          <path d="M20 11.500c3 2 6 2 10 0l-2 8c-3 2-7 2-10 0z" fill="#8cc63f" />
          <path d="M8 20.500c3-2 6-2 9 0l-2 7c-3-2-6-2-9 0z" fill="#2c9be0" />
          <path d="M18 21c3 2 6 2 9.500 0l-2 7c-3 2-6 2-9.500 0z" fill="#fcc531" />
        </svg>
      </button>
      <button type="button" aria-label="Internet Explorer" className="ml-[28px]">
        <svg viewBox="0 0 32 32" className="size-8">
          <path d="M25.500 21.500A10.500 10.500 0 1126.500 17.500H11" fill="none" stroke="#1f86c9" strokeWidth="6.500" />
          <path d="M25.500 21.500A10.500 10.500 0 1126.500 17.500H11" fill="none" stroke="#5cc4f2" strokeWidth="5" />
          <path d="M3 29C-2 24 18 0 28 3c2 1 2 3 1 5M3 29c3 2 8-1 11-3" fill="none" stroke="#f3b71b" strokeWidth="2.500" />
        </svg>
      </button>
      <button type="button" aria-label="Explorador" className="ml-[28px]">
        <svg viewBox="0 0 34 30" className="h-[30px] w-[34px]">
          <path d="M2 4h9l2 2h18v22H2z" fill="#e9cf74" stroke="#b99a3c" />
          <path d="M5 1h8v4H5zM14 3h7v3h-7zM23 4h6v3h-6z" fill="#fff" stroke="#c4a94e" strokeWidth=".6" />
          <path d="M5.500 1.500h3v3h-3z" fill="#25b34a" /><path d="M15 3.500h2.500v2H15z" fill="#e23c1f" /><path d="M24 4.500h2.500v2H24z" fill="#3a8fe0" />
          <path d="M1 8h32v18H1z" fill="#f8e9a6" stroke="#cdb053" />
          <path d="M6 30V21q0-2 2-2h18q2 0 2 2v9h-5v-6H11v6z" fill="#8fcdf0" stroke="#5a9dc6" />
          <path d="M9 13v10M4 18h10" stroke="#fff" />
        </svg>
      </button>
      <button type="button" aria-label="Editor de imágenes" className="ml-[31px]">
        <svg viewBox="0 0 28 28" className="size-7">
          <path fill="#8f1414" d="M0 0h28v28H0z" /><path fill="#c23a34" d="M1 1h26v26H1z" /><path fill="#f0dedb" d="M5 5h18v18H5z" stroke="#7a0e0e" />
          <path d="M8 21l6-7 6 7M14 13l8-7" stroke="#a81c1c" strokeWidth="2.200" fill="none" /><circle cx="10" cy="10" r="2.800" fill="#b42020" /><circle cx="20" cy="15" r="1.300" fill="#b42020" />
        </svg>
      </button>
      <button type="button" aria-label="Google Chrome" className="ml-[18px] flex h-[39px] w-[60px] items-center justify-center rounded-xs border border-[#555] bg-gradient-to-b from-[#f3f3f3] to-[#e4e4e4]">
        <svg viewBox="0 0 34 34" className="size-[34px]">
          <circle cx="17" cy="17" r="16" fill="#34a853" />
          <path d="M3.100 9A16 16 0 0130.900 9H17l-7 12z" fill="#ea4335" />
          <path d="M30.900 9A16 16 0 0117 33l7-12a8 8 0 000-8L17 9z" fill="#fbbc04" />
          <circle cx="17" cy="17" r="7.800" fill="#fff" /><circle cx="17" cy="17" r="6" fill="#1a73e8" />
          <circle cx="25" cy="25" r="8" fill="#e83a78" />
          <text x="25" y="28" textAnchor="middle" fill="#fff" className="text-[8px] font-semibold">C</text>
        </svg>
      </button>
      <button type="button" aria-label="Paint" className="ml-0.5 flex h-[39px] w-[60px] items-center justify-center rounded-xs border border-[#666] bg-gradient-to-b from-[#dedede] to-[#cfcfcf]">
        <svg viewBox="0 0 32 32" className="size-8">
          <path d="M14 5c9-2 15 4 13 12-2 7-8 11-12 9-3-2 0-5-3-6S2 25 1 19C0 12 6 7 14 5z" fill="#bcdcf0" stroke="#6d9fc2" />
          <circle cx="11" cy="12" r="2.700" fill="#3fb54a" /><circle cx="18" cy="9.500" r="2.700" fill="#f4a623" /><circle cx="6.500" cy="17" r="2.700" fill="#e3392b" /><circle cx="14" cy="19" r="2.500" fill="#fff" stroke="#6d9fc2" />
          <path d="M28 5l-9 25-2 1v-3L26 4z" fill="#e28a2c" stroke="#9c5b17" strokeWidth=".6" />
          <path d="M25 1l6 0 0 6-4 3-3-2z" fill="#a9784a" />
        </svg>
      </button>
      <div className="ml-auto flex items-center gap-2">
        <svg viewBox="0 0 16 16" className="size-4"><circle cx="8" cy="8" r="8" fill="#ff7800" /><path d="M6 3.500c1-1 2-.5 2.500.5l4.500 7.500-7-4zM5 7.500l6 4H3z" fill="#fff" /></svg>
        <svg viewBox="0 0 16 16" className="size-4" fill="#fff" stroke="#444" strokeWidth=".8"><path d="M1 5.500h2.500L7 2v12L3.500 10.500H1z" /><path d="M9 5c1.500 1.500 1.500 4.500 0 6M11 3.500c2.500 2 2.500 7 0 9M13 2c3.500 3 3.500 9 0 12" fill="none" stroke="#fff" strokeWidth="1.200" /></svg>
        <svg viewBox="0 0 18 16" className="h-4 w-[18px]" fill="#8a8a8a" stroke="#fff" strokeWidth="1.300"><path d="M6 4h10v8H6zM8 15h8M12 12v3M1 1v4h4V1M3 5v9h3" /></svg>
        <svg viewBox="0 0 16 16" className="size-4"><path d="M3 12l4-2 4 2 2-7" stroke="#ddd" strokeWidth="2" fill="none" /><path d="M4 6l4 1 3-3v4l2 3-4 1-2-1-3-1z" fill="#c8281c" /></svg>
        <svg viewBox="0 0 16 16" className="size-4" fill="#fff" stroke="#555" strokeWidth=".7"><path d="M1 .5h2v15H1zM3.500 1.500c3-1 4 1.500 6 2 2 .5 3 0 6-.5-1 3-2 5-5 5s-4-2-7-1z" /></svg>
        <svg viewBox="0 0 16 16" className="size-4"><path d="M1 5.500h3L9 1v14L4 10.500H1z" fill="#d9512c" stroke="#fff" strokeWidth=".8" /><path d="M11 5c1.500 1.500 1.500 4.500 0 6M13 3c3 3 3 7 0 10" fill="none" stroke="#8a2c16" strokeWidth="1.300" /></svg>
      </div>
      <div className="ml-4 text-center leading-[17px]">
        <div>05:20 p.m.</div>
        <div>28/09/2024</div>
      </div>
      <button type="button" aria-label="Mostrar escritorio" className="ml-3 h-full w-[14px] border border-[#777] bg-gradient-to-br from-[#8c8c8c] to-[#c9c9c9]" />
    </footer>
  );
}

export default function App() {
  return (
    <div className="min-h-screen bg-white">
      <div className="w-full max-w-[1366px] font-['Open_Sans','Noto_Sans',sans-serif]">
        <TabBar />
        <AddressBar />
        <div className="flex border-t border-[#c9cbcb]">
          <main className="min-w-0 flex-1">
            <SiteHeader />
            <PromoBanner />
            <div className="flex h-[5px] bg-[#f5f5f5]">
              <div className="mr-[189px] ml-[190px] flex-1 bg-[#050b1e]" />
            </div>
            <div className="flex bg-[#f0f2f7]">
              <DrawingTools />
              <section className="min-w-0 flex-1">
                <Toolbar />
                <div className="ml-[5px] flex h-[6px] w-[27px] items-center justify-center border-r border-[#d7dade]">
                  <svg viewBox="0 0 6 3" className="h-[3px] w-1.5"><path d="M3 0l3 3H0z" fill="#bbb" /></svg>
                </div>
                <div className="mr-1.5 ml-1.5">
                  <div className="relative bg-black">
                    <Legend />
                    <Chart />
                  </div>
                  <BottomBar />
                </div>
              </section>
            </div>
          </main>
          <div className="flex w-[17px] shrink-0 flex-col items-center justify-between bg-[#f1f1f1] py-[7px]">
            <svg viewBox="0 0 8 4" className="h-1 w-2"><path d="M0 4h8L4 0z" fill="#505050" /></svg>
            <div className="mt-[58px] mb-auto h-[102px] w-[13px] bg-[#c1c1c1]" />
            <Caret className="text-[#505050]" />
          </div>
        </div>
        <Taskbar />
      </div>
    </div>
  );
}
